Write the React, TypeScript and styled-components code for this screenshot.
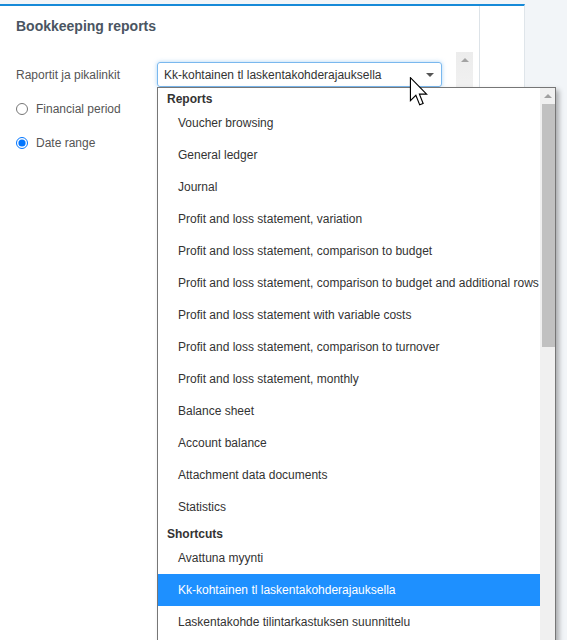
import React from "react";
import styled, { createGlobalStyle } from "styled-components";

const GlobalStyle = createGlobalStyle`
  html, body {
    margin: 0;
    padding: 0;
    height: 100%;
    overflow: hidden;
    background: #f2f5f8;
    font-family: "Liberation Sans", Arial, sans-serif;
  }
`;

const Page = styled.div`
  padding-top: 4px;
  height: 640px;
  box-sizing: border-box;
`;

const Panel = styled.section`
  display: flex;
  width: 525px;
  height: 100%;
  background: #fff;
  border-top: 2px solid #168ad8;
  border-right: 1px solid #dfe5ea;
  box-sizing: border-box;
`;

const Main = styled.div`
  display: flex;
  flex-direction: column;
  width: 480px;
  border-right: 1px solid #dde3e8;
  box-sizing: border-box;
`;

const Title = styled.h2`
  margin: 0;
  padding: 11px 16px 0;
  height: 46px;
  box-sizing: border-box;
  font-size: 14px;
  line-height: 18px;
  font-weight: bold;
  color: #4a5562;
`;

const ScrollArea = styled.div`
  display: flex;
  flex: 1;
`;

const Content = styled.div`
  flex: 1;
  padding: 10px 0 0 16px;
`;

const ScrollTrack = styled.div`
  width: 17px;
  margin-right: 6px;
  background: linear-gradient(#ececec, #f0f0f0 30px);
  display: flex;
  flex-direction: column;
  align-items: center;
  padding-top: 6px;
  box-sizing: border-box;
`;

const UpArrow = styled.span<{ $color?: string }>`
  width: 0;
  height: 0;
  border-left: 4px solid transparent;
  border-right: 4px solid transparent;
  border-bottom: 4px solid ${(p) => p.$color || "#a3a3a3"};
`;

const FieldRow = styled.div`
  display: grid;
  grid-template-columns: 141px 285px;
  align-items: center;
`;

const Label = styled.label`
  font-size: 12px;
  color: #555;
`;

const SelectWrap = styled.div`
  position: relative;
`;

const SelectBox = styled.div`
  display: flex;
  align-items: center;
  justify-content: space-between;
  height: 25px;
  padding: 0 6px 0 6px;
  box-sizing: border-box;
  border: 1px solid #7ab8ee;
  border-radius: 3px;
  box-shadow: 0 0 4px rgba(102, 175, 233, 0.55);
  font-size: 12px;
  color: #333;
`;

const Caret = styled.span`
  width: 0;
  height: 0;
  margin-right: 1px;
  border-left: 4px solid transparent;
  border-right: 4px solid transparent;
  border-top: 4px solid #555;
`;

const Dropdown = styled.div`
  position: absolute;
  top: 100%;
  left: 0;
  width: 399px;
  height: 580px;
  display: flex;
  background: #fff;
  border: 1px solid #767676;
  box-sizing: border-box;
  box-shadow: 3px 3px 5px rgba(0, 0, 0, 0.3);
  z-index: 5;
`;

const List = styled.ul`
  flex: 1;
  margin: 0;
  padding: 0;
  list-style: none;
  font-size: 12px;
  color: #333;
`;

const GroupHeader = styled.li`
  height: 19px;
  padding: 3px 0 0 9px;
  box-sizing: border-box;
  line-height: 16px;
  font-weight: bold;
`;

const Option = styled.li<{ $active?: boolean }>`
  height: 32px;
  line-height: 32px;
  padding-left: 20px;
  white-space: nowrap;
  background: ${(p) => (p.$active ? "#1e90ff" : "transparent")};
  color: ${(p) => (p.$active ? "#fff" : "#333")};
`;

const DropScroll = styled.div`
  width: 15px;
  background: #f0f0f0;
  display: flex;
  flex-direction: column;
  align-items: flex-end;
`;

const ArrowCell = styled.div`
  height: 16px;
  width: 100%;
  display: flex;
  align-items: center;
  justify-content: center;
`;

const Thumb = styled.div`
  width: 13px;
  height: 243px;
  background: #c1c1c1;
`;

const RadioList = styled.div`
  display: flex;
  flex-direction: column;
  gap: 14px;
  margin-top: 12px;
`;

const RadioRow = styled.label`
  display: flex;
  align-items: center;
  height: 20px;
  font-size: 12px;
  color: #555;
`;

const Radio = styled.input`
  margin: 0 8px 0 0;
  width: 12px;
  height: 12px;
`;

const Side = styled.div`
  flex: 1;
`;

const Pointer = styled.svg`
  position: absolute;
  left: 252px;
  top: 15px;
  z-index: 10;
`;

const reports = [
  "Voucher browsing",
  "General ledger",
  "Journal",
  "Profit and loss statement, variation",
  "Profit and loss statement, comparison to budget",
  "Profit and loss statement, comparison to budget and additional rows",
  "Profit and loss statement with variable costs",
  "Profit and loss statement, comparison to turnover",
  "Profit and loss statement, monthly",
  "Balance sheet",
  "Account balance",
  "Attachment data documents",
  "Statistics",
];

const shortcuts = [
  "Avattuna myynti",
  "Kk-kohtainen tl laskentakohderajauksella",
  "Laskentakohde tilintarkastuksen suunnittelu",
];

const selected = "Kk-kohtainen tl laskentakohderajauksella";

export default function App() {
  return (
    <Page>
      <GlobalStyle />
      <Panel>
        <Main>
          <Title>Bookkeeping reports</Title>
          <ScrollArea>
            <Content>
              <FieldRow>
                <Label>Raportit ja pikalinkit</Label>
                <SelectWrap>
                  <SelectBox>
                    <span>{selected}</span>
                    <Caret />
                  </SelectBox>
                  <Dropdown>
                    <List>
                      <GroupHeader>Reports</GroupHeader>
                      {reports.map((r) => (
                        <Option key={r}>{r}</Option>
                      ))}
                      <GroupHeader>Shortcuts</GroupHeader>
                      {shortcuts.map((s) => (
                        <Option key={s} $active={s === selected}>
                          {s}
                        </Option>
                      ))}
                    </List>
                    <DropScroll>
                      <ArrowCell>
                        <UpArrow $color="#a0a0a0" />
                      </ArrowCell>
                      <Thumb />
                    </DropScroll>
                  </Dropdown>
                  <Pointer width="20" height="30" viewBox="0 0 13 21">
                    <path
                      d="M0.5 0.5 L0.5 16.5 L4.3 12.8 L7 19.5 L9.4 18.5 L6.8 12 L11.8 12 Z"
                      fill="#fff"
                      stroke="#000"
                      strokeWidth="0.8"
                      strokeLinejoin="miter"
                    />
                  </Pointer>
                </SelectWrap>
              </FieldRow>
              <RadioList>
                <RadioRow>
                  <Radio type="radio" name="period" />
                  Financial period
                </RadioRow>
                <RadioRow>
                  <Radio type="radio" name="period" defaultChecked />
                  Date range
                </RadioRow>
              </RadioList>
            </Content>
            <ScrollTrack>
              <UpArrow />
            </ScrollTrack>
          </ScrollArea>
        </Main>
        <Side />
      </Panel>
    </Page>
  );
}
